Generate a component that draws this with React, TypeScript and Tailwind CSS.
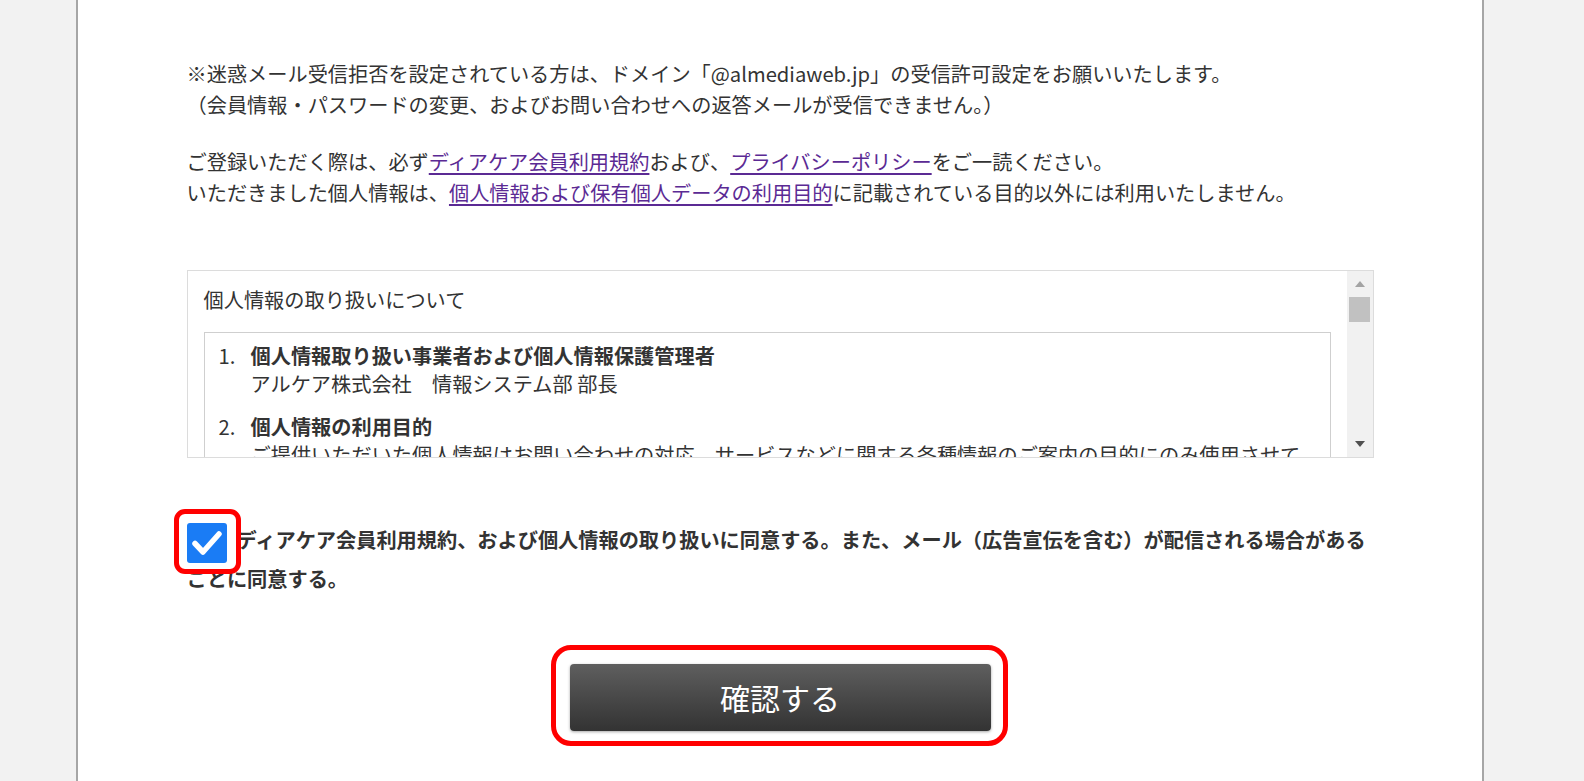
const font = { fontFamily: '"Noto Sans CJK JP", "Noto Sans", sans-serif' }

interface ItemProps {
  no: string
  title: string
  body: string
}

function PolicyItem({ no, title, body }: ItemProps) {
  return (
    <li className="mb-[15px] flex">
      <span className="w-[32px] shrink-0">{no}</span>
      <div>
        <p className="font-bold">{title}</p>
        <p>{body}</p>
      </div>
    </li>
  )
}

export default function App() {
  return (
    <div style={font} className="flex h-[781px] w-full overflow-hidden bg-[#f2f2f2] text-[20.2px] text-[#333]">
      <main className="ml-[76px] w-[1408px] shrink-0 border-x-2 border-[#a6a6a6] bg-white pt-[58px]">
        <div className="mx-auto w-[1187px]">
          <div className="leading-[31px]">
            <p className="mb-[26px]">
              ※迷惑メール受信拒否を設定されている方は、ドメイン「@almediaweb.jp」の受信許可設定をお願いいたします。
              <br />
              （会員情報・パスワードの変更、およびお問い合わせへの返答メールが受信できません。）
            </p>
            <p>
              ご登録いただく際は、必ず
              <a className="text-[#5b2a94] underline underline-offset-[3px]">ディアケア会員利用規約</a>
              および、
              <a className="text-[#5b2a94] underline underline-offset-[3px]">プライバシーポリシー</a>
              をご一読ください。
              <br />
              いただきました個人情報は、
              <a className="text-[#5b2a94] underline underline-offset-[3px]">個人情報および保有個人データの利用目的</a>
              に記載されている目的以外には利用いたしません。
            </p>
          </div>

          <section className="mt-[62px] flex h-[188px] border border-[#dcdcdc]">
            <div className="flex-1 overflow-hidden px-[16px] pt-[14px]">
              <h2 className="leading-[30px]">個人情報の取り扱いについて</h2>
              <ol className="mt-[17px] border border-[#cfcfcf] pt-[9px] pr-[24px] pl-[14px] leading-[28px]">
                <PolicyItem no="1." title="個人情報取り扱い事業者および個人情報保護管理者" body="アルケア株式会社　情報システム部 部長" />
                <PolicyItem
                  no="2."
                  title="個人情報の利用目的"
                  body="ご提供いただいた個人情報はお問い合わせの対応、サービスなどに関する各種情報のご案内の目的にのみ使用させていただきます。"
                />
                <PolicyItem no="3." title="個人情報の第三者提供" body="ご本人の同意がある場合または法令に基づく場合を除き、第三者に提供することはありません。" />
              </ol>
            </div>
            <div className="flex w-[26px] shrink-0 flex-col items-center bg-[#f1f1f1]">
              <div className="flex h-[26px] w-full items-center justify-center">
                <svg width="10" height="6" viewBox="0 0 10 6"><path d="M5 0 L10 6 L0 6 Z" fill="#a3a3a3" /></svg>
              </div>
              <div className="h-[25px] w-[21px] bg-[#c1c1c1]" />
              <div className="flex-1" />
              <div className="flex h-[26px] w-full items-center justify-center">
                <svg width="10" height="6" viewBox="0 0 10 6"><path d="M0 0 L10 0 L5 6 Z" fill="#505050" /></svg>
              </div>
            </div>
          </section>

          <p className="mt-[64px] font-bold leading-[36px]">
            <span className="relative mr-[10px] inline-block h-[40px] w-[40px] -my-[2px] align-middle">
              <span className="absolute -top-[14px] -right-[14px] -bottom-[11px] -left-[13px] rounded-[11px] border-[5px] border-[#ff0000] bg-white" />
              <span className="relative block h-[40px] w-[40px] rounded-[3px] bg-[#1a7cf5]">
                <svg width="40" height="40" viewBox="0 0 40 40">
                  <path d="M8 20.5 L16 29 L32 11" fill="none" stroke="#fff" strokeWidth="5.5" strokeLinecap="round" strokeLinejoin="round" />
                </svg>
              </span>
            </span>
            ディアケア会員利用規約、および個人情報の取り扱いに同意する。また、メール（広告宣伝を含む）が配信される場合があることに同意する。
          </p>

          <div className="mt-[67px] flex justify-center">
            <div className="relative">
              <span className="absolute -top-[19px] -right-[17px] -bottom-[15px] -left-[19px] rounded-[20px] border-[5px] border-[#ff0000]" />
              <button className="relative h-[67px] w-[421px] rounded-[4px] bg-gradient-to-b from-[#5f5f5f] to-[#333] text-[30px] text-white shadow-[0_1px_3px_rgba(0,0,0,0.35)]">
                確認する
              </button>
            </div>
          </div>
        </div>
      </main>
    </div>
  )
}
